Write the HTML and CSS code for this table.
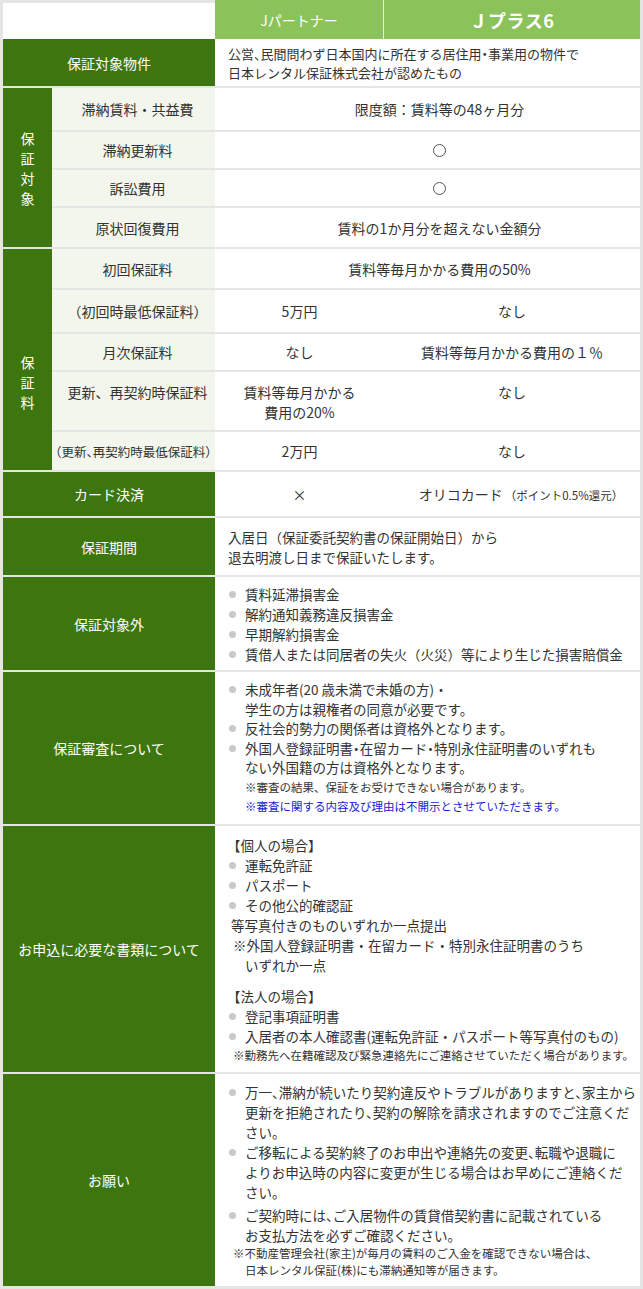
FILE: index.html
```html
<!DOCTYPE html>
<html lang="ja">
<head>
<meta charset="utf-8">
<title>Jパートナー / Jプラス6</title>
<link rel="stylesheet" href="styles.css">
</head>
<body>
<div class="sheet">
<table class="spec">
<colgroup><col class="c1"><col class="c2"><col class="c3"><col class="c4"></colgroup>
<thead>
<tr class="hrow">
<th colspan="2" class="blank"></th>
<th class="plan p1">Jパートナー</th>
<th class="plan p2">Ｊプラス6</th>
</tr>
</thead>
<tbody>
<tr class="h47">
<th colspan="2" class="lab">保証対象物件</th>
<td colspan="2" class="para tight"><span class="hw">公営、民間問わず日本国内に所在する居住用・事業用の物件で</span><br>日本レンタル保証株式会社が認めたもの</td>
</tr>
<tr class="h44">
<th rowspan="4" class="grp">保<br>証<br>対<br>象</th>
<th class="sub">滞納賃料・共益費</th>
<td colspan="2" class="val wide">限度額：賃料等の48ヶ月分</td>
</tr>
<tr class="h38">
<th class="sub">滞納更新料</th>
<td colspan="2" class="val wide"><span class="circ"></span></td>
</tr>
<tr class="h38">
<th class="sub">訴訟費用</th>
<td colspan="2" class="val wide"><span class="circ"></span></td>
</tr>
<tr class="h41">
<th class="sub">原状回復費用</th>
<td colspan="2" class="val wide">賃料の1か月分を超えない金額分</td>
</tr>
<tr class="h41">
<th rowspan="5" class="grp grp-low">保<br>証<br>料</th>
<th class="sub">初回保証料</th>
<td colspan="2" class="val wide">賃料等毎月かかる費用の50%</td>
</tr>
<tr class="h44">
<th class="sub">（初回時最低保証料）</th>
<td class="val">5万円</td>
<td class="val">なし</td>
</tr>
<tr class="h38">
<th class="sub">月次保証料</th>
<td class="val">なし</td>
<td class="val">賃料等毎月かかる費用の１％</td>
</tr>
<tr class="h60 top">
<th class="sub">更新、再契約時保証料</th>
<td class="val">賃料等毎月かかる<br>費用の20%</td>
<td class="val">なし</td>
</tr>
<tr class="h40">
<th class="sub small">（更新、再契約時最低保証料）</th>
<td class="val">2万円</td>
<td class="val">なし</td>
</tr>
<tr class="h46">
<th colspan="2" class="lab">カード決済</th>
<td class="val">×</td>
<td class="val card">オリコカード<span class="pt">（ポイント0.5%還元）</span></td>
</tr>
<tr class="h59">
<th colspan="2" class="lab">保証期間</th>
<td colspan="2" class="para">入居日（保証委託契約書の保証開始日）から<br>退去明渡し日まで保証いたします。</td>
</tr>
<tr class="h95">
<th colspan="2" class="lab">保証対象外</th>
<td colspan="2" class="list">
<ul>
<li>賃料延滞損害金</li>
<li>解約通知義務違反損害金</li>
<li>早期解約損害金</li>
<li>賃借人または同居者の失火（火災）等により生じた損害賠償金</li>
</ul>
</td>
</tr>
<tr class="h154">
<th colspan="2" class="lab">保証審査について</th>
<td colspan="2" class="list l195">
<ul>
<li>未成年者(20 歳未満で未婚の方)・<br>学生の方は親権者の同意が必要です。</li>
<li>反社会的勢力の関係者は資格外となります。</li>
<li><span class="hw">外国人登録証明書・在留カード・特別永住証明書のいずれも</span><br>ない外国籍の方は資格外となります。</li>
</ul>
<p class="note ind">※審査の結果、保証をお受けできない場合があります。</p>
<p class="note ind blue">※審査に関する内容及び理由は不開示とさせていただきます。</p>
</td>
</tr>
<tr class="h248">
<th colspan="2" class="lab">お申込に必要な書類について</th>
<td colspan="2" class="list docs">
<p class="head">【個人の場合】</p>
<ul>
<li>運転免許証</li>
<li>パスポート</li>
<li>その他公的確認証</li>
</ul>
<p class="plain">等写真付きのものいずれか一点提出</p>
<p class="plain kome">※外国人登録証明書・在留カード・特別永住証明書のうち<br><span class="cont">いずれか一点</span></p>
<p class="head gap">【法人の場合】</p>
<ul>
<li>登記事項証明書</li>
<li>入居者の本人確認書(運転免許証・パスポート等写真付のもの)</li>
</ul>
<p class="note">※勤務先へ在籍確認及び緊急連絡先にご連絡させていただく場合があります。</p>
</td>
</tr>
<tr class="h214">
<th colspan="2" class="lab">お願い</th>
<td colspan="2" class="list hwall">
<ul>
<li>万一、滞納が続いたり契約違反やトラブルがありますと、家主から<br>更新を拒絶されたり、契約の解除を請求されますのでご注意くだ<br>さい。</li>
<li>ご移転による契約終了のお申出や連絡先の変更、転職や退職に<br>よりお申込時の内容に変更が生じる場合はお早めにご連絡くだ<br>さい。</li>
<li class="sp">ご契約時には、ご入居物件の賃貸借契約書に記載されている<br>お支払方法を必ずご確認ください。</li>
</ul>
<p class="note">※不動産管理会社(家主)が毎月の賃料のご入金を確認できない場合は、<br><span class="cont2">日本レンタル保証(株)にも滞納通知等が届きます。</span></p>
</td>
</tr>
</tbody>
</table>
</div>
</body>
</html>
```

FILE: styles.css
```css
* { box-sizing: border-box; }
html, body { margin: 0; padding: 0; }
body {
  background: #e5e5e5;
  font-family: "Noto Sans CJK JP", "Noto Sans", sans-serif;
  color: #333;
}
.sheet { width: 643px; padding: 0 3px 3px; }
.spec {
  width: 637px;
  table-layout: fixed;
  border-collapse: separate;
  border-spacing: 0;
  background: #fff;
}
.c1 { width: 49px; }
.c2 { width: 163px; }
.c3 { width: 169px; }
.c4 { width: 256px; }
.spec th, .spec td { padding: 0; font-weight: normal; vertical-align: middle; }
.spec tbody tr + tr > * { border-top: 2px solid #e5e5e5; }

/* header */
.hrow { height: 39px; }
.blank { background: #fff; box-shadow: inset 0 3px 0 #e5e5e5; }
.plan { background: #8bc25a; color: #fff; text-align: center; }
.p1 { font-size: 14px; border-right: 1px solid #e9eee3; }
.p2 { font-size: 18px; font-weight: bold !important; letter-spacing: 0.5px; }

/* row heights */
.h38 { height: 38px; }
.h40 { height: 40px; }
.h41 { height: 41px; }
.h44 { height: 44px; }
.h46 { height: 46px; }
.h47 { height: 47px; }
.h59 { height: 59px; }
.h60 { height: 60px; }
.h95 { height: 95px; }
.h154 { height: 154px; }
.h248 { height: 248px; }
.h214 { height: 214px; }

/* label cells */
.lab {
  background: #3d760f;
  color: #fff;
  font-size: 14px;
  text-align: center;
}
.grp {
  background: #3d760f;
  color: #fff;
  font-size: 14px;
  line-height: 20px;
  text-align: center;
}
.grp-low { padding-top: 44px !important; }
.sub {
  background: #f3f6ec;
  font-size: 14px;
  text-align: center;
  padding-left: 8px !important;
  color: #333;
}
.sub.small {
  font-size: 12.5px;
  font-feature-settings: "halt";
  white-space: nowrap;
  padding-left: 0 !important;
}

/* value cells */
.val { font-size: 14px; text-align: center; line-height: 20px; color: #333; }
.val.wide { padding-left: 24px !important; }
.val.card { padding-left: 18px !important; }
.top > * { vertical-align: top !important; padding-top: 10px !important; }
.circ {
  display: inline-block;
  width: 13px;
  height: 13px;
  border: 1px solid #555;
  border-radius: 50%;
  vertical-align: -1px;
}
.pt { font-size: 11.5px; margin-left: 2px; }

.para {
  font-size: 13.5px;
  line-height: 20px;
  padding-left: 13px !important;
}
.para.tight { font-size: 13px; line-height: 19px; }
.hw, .hwall { font-feature-settings: "halt"; }

/* lists */
.list { font-size: 13.5px; line-height: 20px; padding: 0 !important; white-space: nowrap; }
.list ul { list-style: none; margin: 0; padding: 0; }
.list li { padding-left: 30px; }
.list li::before {
  content: "";
  display: inline-block;
  width: 7px;
  height: 7px;
  border-radius: 50%;
  background: #c9c9c9;
  margin-left: -16px;
  margin-right: 9px;
  vertical-align: 2px;
}
.l195 { line-height: 19.5px; }
.list p { margin: 0; }
.note { font-size: 11.5px; line-height: 19px; padding-left: 18px; }
.note.ind { padding-left: 30px; }
.blue { color: #1a1ad6; }
.docs .head { padding-left: 12px; }
.docs .gap { margin-top: 11px; }
.docs .plain { padding-left: 16px; }
.docs p.plain:first-of-type { margin-top: 2px; }
.docs .kome { padding-left: 18px; }
.docs .cont { padding-left: 12px; }
.docs .note { line-height: 18px; }
.list li.sp { margin-top: 3px; }
.hwall .note { line-height: 17px; }
.cont2 { padding-left: 12px; }
```
